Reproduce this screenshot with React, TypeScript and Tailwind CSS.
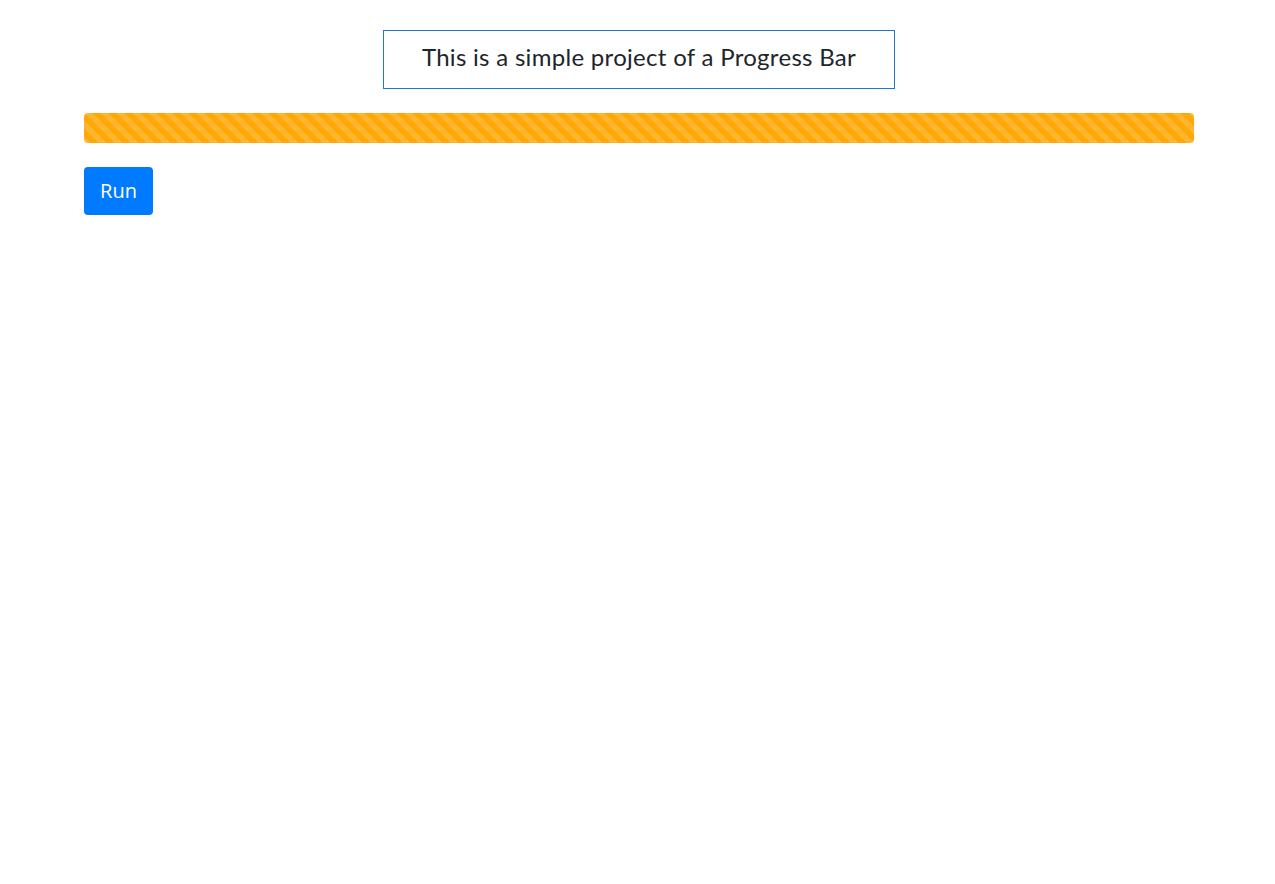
import React from "react";

export default function App() {
  return (
    <div className="min-h-screen bg-white text-[#212529]" style={{ fontFamily: '"Open Sans", "Liberation Sans", sans-serif' }}>
      <div className="ml-[84px] w-[1110px] pt-[30px]">
        <div className="flex justify-center">
          <div
            className="flex h-[59px] w-[512px] items-center justify-center border border-[#1f78cc] pb-[5px] text-[24px] text-[#212529]"
            style={{ fontFamily: 'Lato, "Noto Sans", sans-serif' }}
          >
            <span className="tracking-[0.3px]">This is a simple project of a Progress Bar</span>
          </div>
        </div>
        <div className="mt-[24px] h-[30px] w-full overflow-hidden rounded-[4px] bg-[#e9ecef]">
          <div
            className="h-full w-full rounded-[4px] bg-[#ffa808] bg-[length:16px_16px]"
            style={{
              backgroundImage:
                "linear-gradient(45deg, rgba(255,255,255,.15) 25%, transparent 25%, transparent 50%, rgba(255,255,255,.15) 50%, rgba(255,255,255,.15) 75%, transparent 75%, transparent)",
            }}
          />
        </div>
        <button className="mt-[24px] h-[48px] w-[69px] rounded-[4px] bg-[#007bff] text-[20px] text-white" style={{ fontFamily: '"Open Sans", "Liberation Sans", sans-serif' }}>
          Run
        </button>
      </div>
    </div>
  );
}
